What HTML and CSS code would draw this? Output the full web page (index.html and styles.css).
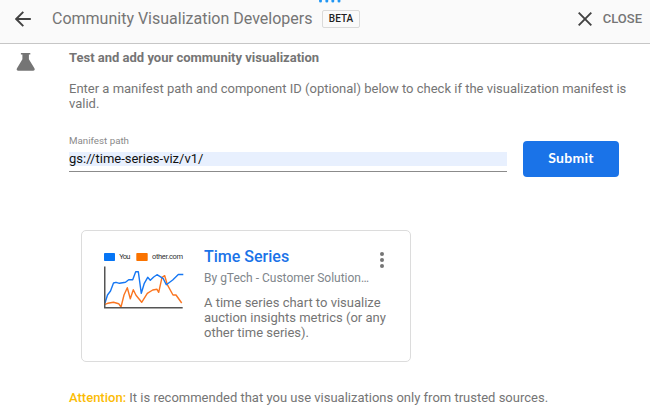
FILE: index.html
```html
<!DOCTYPE html>
<html lang="en">
<head>
<meta charset="utf-8">
<title>Community Visualization Developers</title>
<link rel="stylesheet" href="styles.css">
</head>
<body>
<header class="topbar">
  <svg class="back" width="16" height="16" viewBox="0 0 16 16"><path d="M15.8 8H1.5M8.3 .8L1.2 8l7.1 7.2"/></svg>
  <h1 class="title">Community Visualization Developers</h1>
  <span class="badge">BETA</span>
  <button class="close"><svg width="14" height="14" viewBox="0 0 14 14"><path d="M.7.7l12.6 12.6M13.3.7L.7 13.3"/></svg><span>CLOSE</span></button>
  <svg class="grip" width="22" height="3" viewBox="0 0 22 3"><g><circle cx="1.5" cy="1" r="1.5"/><circle cx="7.8" cy="1" r="1.5"/><circle cx="13.8" cy="1" r="1.5"/><circle cx="20" cy="1" r="1.5"/></g></svg>
</header>
<main class="content">
  <svg class="flask" width="18" height="18" viewBox="0.3 0 18 18"><path d="M4.2 0h9.4v1.6h-1.4v4.7l5.5 8.9c.8 1.3.1 2.5-1.3 2.5H1.6c-1.4 0-2.1-1.2-1.3-2.5l5.4-8.9V1.6H4.2z"/></svg>
  <section class="panel">
    <h2 class="heading">Test and add your community visualization</h2>
    <p class="intro">Enter a manifest path and component ID (optional) below to check if the visualization manifest is<br>valid.</p>
    <div class="form">
      <label class="field"><span class="label">Manifest path</span><span class="value">gs://time-series-viz/v1/</span></label>
      <button class="submit">Submit</button>
    </div>
    <article class="card">
      <svg class="chart" width="82" height="60" viewBox="0 0 82 60">
        <rect x="0" y="3" width="11" height="8" rx=".8" fill="#0675f5"/>
        <text x="15.2" y="9" textLength="11.3">You</text>
        <rect x="32.3" y="3" width="11.4" height="8" rx=".8" fill="#fa7300"/>
        <text x="48" y="9" textLength="31">other.com</text>
        <path class="orange" d="M1 54.3L3.7 53.3 9.5 52.3 14.7 53.7 17 57 20 45 23.3 37.7 26.3 48.7 29.3 39.7 32 45.3 37.7 52.3 43.3 43.3 48.7 40 53 39.3 54.7 42.3 58 27.3 60.7 25.7 63.3 34.7 69 45 72 45 77.7 53"/>
        <path class="blue" d="M1 53L3.5 45 6.5 41 9.5 33 12 32.3 15.5 33.3 21.5 32.3 24.7 29.7 28.7 29.7 31.7 21.7 34.3 21.7 37.3 43.3 40.3 33.3 43.7 27.3 46.3 30.3 49.7 27 53 24.7 59.3 28.7 62.3 34.7 68.7 30 74.3 24.5 79.3 24.5"/>
        <path class="axis" d="M.7 16.5V57.7H78.7"/>
      </svg>
      <div class="info">
        <h3 class="name">Time Series</h3>
        <p class="author">By gTech - Customer Solution…</p>
        <p class="desc">A time series chart to visualize<br>auction insights metrics (or any<br>other time series).</p>
      </div>
      <svg class="more" width="4" height="16" viewBox="0 0 4 16"><circle cx="2" cy="2" r="2"/><circle cx="2" cy="8" r="2"/><circle cx="2" cy="14" r="2"/></svg>
    </article>
    <p class="notice"><strong>Attention:</strong> It is recommended that you use visualizations only from trusted sources.</p>
  </section>
</main>
</body>
</html>
```
FILE: styles.css
```css
* { box-sizing: border-box; margin: 0; padding: 0; }
body { width: 650px; height: 407px; overflow: hidden; background: #fff; color: #757575; font: 13px/15px Roboto, "Liberation Sans", sans-serif; }
button { border: 0; background: none; font: inherit; color: inherit; }
svg { display: block; flex: none; }
.topbar { position: relative; display: flex; align-items: center; height: 44px; padding: 0 7px 6px 15px; background: #fafafa; border-bottom: 1px solid #c6c6c6; }
.back, .close svg { fill: none; stroke: #424242; stroke-width: 1.9; }
.title { margin-left: 21px; width: 260px; font-size: 16px; line-height: 20px; font-weight: 400; white-space: nowrap; }
.badge { margin-left: 10px; width: 38px; height: 18px; border: 1px solid #dadada; border-radius: 2px; color: #212121; font-size: 10px; line-height: 16px; font-weight: 500; text-align: center; }
.close { display: flex; align-items: center; gap: 11px; margin-left: auto; margin-right: 1px; font-weight: 500; }
.grip { position: absolute; left: 319px; top: 0; fill: #2196f3; }
.content { display: flex; padding: 6px 0 0 17px; }
.flask { margin-top: 3px; fill: #757575; overflow: visible; }
.panel { margin-left: 34px; width: 570px; }
.heading { font-size: 13px; line-height: 16px; font-weight: 700; }
.intro { margin-top: 15px; white-space: nowrap; }
.form { display: flex; gap: 16px; margin-top: 24px; }
.field { width: 438px; height: 37px; border-bottom: 1px solid #8b8b8b; }
.label { display: block; height: 17px; font-size: 9.75px; line-height: 12px; color: #8a8a8a; }
.value { display: block; height: 14px; line-height: 14px; color: #111; background: #e8f0fe; }
.submit { margin-top: 6px; width: 96px; height: 36px; border-radius: 4px; background: #1a73e8; color: #fff; font-family: Lato, Roboto, sans-serif; font-size: 14px; line-height: 16px; font-weight: 700; letter-spacing: .3px; padding-bottom: 2px; }
.card { display: flex; margin: 53px 0 0 12px; width: 330px; height: 132px; padding: 19px 26px 0 22px; border: 1px solid #dcdcdc; border-radius: 5px; }
.chart text { font: 7.5px Roboto, sans-serif; fill: #333; }
.chart path { fill: none; stroke-width: 1.4; stroke-linejoin: round; }
.chart .orange { stroke: #fa7520; }
.chart .blue { stroke: #1677f3; }
.chart .axis { stroke: #555; stroke-width: 1.6; }
.info { width: 176px; margin-left: 18px; white-space: nowrap; }
.name { margin-top: -3px; font-size: 16px; line-height: 20px; font-weight: 500; color: #1a73e8; }
.author { margin-top: 4px; font-size: 12px; line-height: 14px; color: #80868b; }
.desc { margin-top: 10px; }
.more { margin-top: 2px; fill: #757575; }
.notice { margin-top: 28px; white-space: nowrap; }
.notice strong { color: #fbbc04; font-weight: 500; }
```
